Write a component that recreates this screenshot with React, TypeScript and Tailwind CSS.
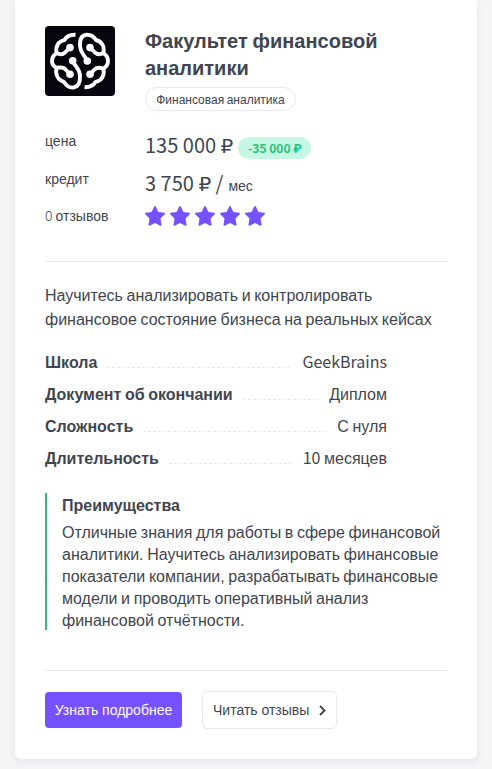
import React from "react";

const SOURCE = "font-['Noto_Sans_CJK_SC','Noto_Sans',sans-serif] [word-spacing:normal]";

function Logo() {
  return (
    <svg viewBox="0 0 70 70" className="block h-[70px] w-[70px] shrink-0 rounded-[4px] bg-[#05060d]">
      <g fill="none" stroke="#fff" strokeWidth="3.9" strokeLinejoin="round">
        <path d="M30.5 8.8C25 8.6 21.5 10.5 19.3 14.2C13 15.5 10.3 20.5 11.6 27.2C8.6 29.2 7 31.8 7 35C7 38.5 9 40.8 12 41.8C17 41 19.5 42 20.5 43.5L25 48.2" />
        <path d="M25 21.8L19.8 26.6C17.8 28.8 14.5 28.4 11.6 27.3" />
        <path d="M11.6 41.5C10 48.5 13 54 19 56C21.5 60 25 62 28.5 61.5C34 60.5 35.3 56 35 50C35 43 31.5 42.5 27.6 35" />
        <path d="M39.5 61.2C45 61.4 48.5 59.5 50.7 55.8C57 54.5 59.7 49.5 58.4 42.8C61.4 40.8 63 38.2 63 35C63 31.8 61.4 29.2 58.4 27.2C59.7 20.5 57 15.5 51 14C48.5 10 45 8.5 41.5 8.7C36.5 9.2 34.7 13.5 35 20C35.3 27 39 28 42.2 35" />
        <path d="M45 21.8L50.2 26.6C52.2 28.8 55.5 28.4 58.4 27.3" />
        <path d="M45 48.2L49.7 43.4C51.7 41.2 55.5 41.6 58.4 42.5" />
      </g>
      <g fill="#fff">
        <circle cx="25" cy="21.6" r="3.8" />
        <circle cx="45" cy="21.6" r="3.8" />
        <circle cx="27.7" cy="34.8" r="3.8" />
        <circle cx="42.3" cy="35" r="3.8" />
        <circle cx="25" cy="48.3" r="3.8" />
        <circle cx="45" cy="48.3" r="3.8" />
      </g>
    </svg>
  );
}

function Star() {
  return (
    <svg viewBox="0 0 20 20" className="h-5 w-5" fill="#7551ff">
      <path d="M9.2.6Q10 -.5 10.8.6L13.4 6L19.2 6.8Q20.5 7.2 19.7 8.2L15.5 12.4L16.5 18.8Q16.5 20 15.3 19.7L10 17L4.7 19.7Q3.5 20 3.5 18.8L4.5 12.4L.3 8.2Q-.5 7.2.8 6.8L6.6 6Z" />
    </svg>
  );
}

function Ruble() {
  return <span className="font-['DejaVu_Sans']">₽</span>;
}

function Row({ label, children }: { label: string; children: React.ReactNode }) {
  return (
    <div className="flex h-8 items-start leading-6">
      <span className="pt-px font-bold">{label}</span>
      <svg className="mx-[10px] mt-[17px] h-px min-w-0 flex-1">
        <line x1="0" y1="0.5" x2="100%" y2="0.5" stroke="#e8e9ea" strokeDasharray="3 2" />
      </svg>
      <span className="h-6 whitespace-nowrap">{children}</span>
    </div>
  );
}

export default function App() {
  return (
    <div className="h-[769px] overflow-hidden bg-[#f4f5f7] px-[15px] font-['Liberation_Sans',Arial,sans-serif] text-base text-[#3f4650] [word-spacing:-0.85px]">
      <div className="h-[759px] w-[462px] rounded-b-[6px] bg-white px-[30px] pt-[26px] shadow-[0_4px_10px_rgba(0,0,0,0.06)]">
        <div className="flex h-[106px] gap-[30px]">
          <Logo />
          <div>
            <h1 className="mt-[2px] text-[20px] leading-[27px] font-bold">
              Факультет финансовой
              <br />
              аналитики
            </h1>
            <div className="mt-[5px] flex h-6 w-[151px] items-center justify-center rounded-full border border-[#e8e9ea] pt-[2px] text-[12px]">
              Финансовая аналитика
            </div>
          </div>
        </div>
        <div className="flex h-[38px]">
          <span className="w-[100px] text-sm leading-[18px]">цена</span>
          <span className={`${SOURCE} -mt-px h-7 text-[20px] leading-7 whitespace-nowrap`}>
            135 000 <Ruble />
          </span>
          <span className={`${SOURCE} mt-[5px] ml-[5px] h-[22px] w-[73px] rounded-full bg-[#c6f7e2] text-center text-[12px] leading-[22px] font-bold whitespace-nowrap text-[#27c281]`}>
            -35 000 <span className="font-['Roboto']">₽</span>
          </span>
        </div>
        <div className="flex h-[37px]">
          <span className="w-[100px] text-sm leading-[18px]">кредит</span>
          <span className={`${SOURCE} -mt-px h-7 text-[20px] leading-7 whitespace-nowrap`}>
            3 750 <Ruble /> /
          </span>
          <span className="ml-[5px] text-sm leading-8">мес</span>
        </div>
        <div className="flex h-[54px]">
          <span className="-mt-px w-[100px] text-sm leading-[18px] whitespace-nowrap">
            <span className={`${SOURCE} font-light`}>0</span> отзывов
          </span>
          <div className="-mt-px flex gap-[5px]">
            <Star />
            <Star />
            <Star />
            <Star />
            <Star />
          </div>
        </div>
        <div className="h-px bg-[#e8e9ea]" />
        <p className="mt-[22px] h-[66px] leading-6 whitespace-nowrap">
          Научитесь анализировать и контролировать
          <br />
          финансовое состояние бизнеса на реальных кейсах
        </p>
        <div className="h-[143px] w-[342px]">
          <Row label="Школа">
            <span className={`${SOURCE} -mt-px block leading-6`}>GeekBrains</span>
          </Row>
          <Row label="Документ об окончании">
            <span className="block pt-px">Диплом</span>
          </Row>
          <Row label="Сложность">
            <span className="block pt-px">С нуля</span>
          </Row>
          <Row label="Длительность">
            <span className="-mt-px block">
              <span className={SOURCE}>10 </span>месяцев
            </span>
          </Row>
        </div>
        <div className="h-[137px] border-l-2 border-[#27c281] pl-[15px] whitespace-nowrap">
          <h2 className="pt-px leading-6 font-bold">Преимущества</h2>
          <p className="mt-[4px] leading-[22px]">
            Отличные знания для работы в сфере финансовой
            <br />
            аналитики. Научитесь анализировать финансовые
            <br />
            показатели компании, разрабатывать финансовые
            <br />
            модели и проводить оперативный анализ
            <br />
            финансовой отчётности.
          </p>
        </div>
        <div className="mt-10 h-px bg-[#e8e9ea]" />
        <div className="mt-5 flex items-center gap-5 text-sm [word-spacing:normal]">
          <button className="h-9 w-[137px] rounded-[4px] bg-[#7551ff] whitespace-nowrap text-white">Узнать подробнее</button>
          <button className="flex h-[38px] w-[135px] items-center rounded-[5px] border border-[#e8e9ea] pl-[10px] whitespace-nowrap">
            Читать отзывы
            <svg viewBox="0 0 7 11" className="ml-[10px] h-[11px] w-[7px]" fill="none" stroke="#3f4650" strokeWidth="1.9">
              <path d="M1 1L5.5 5.5L1 10" />
            </svg>
          </button>
        </div>
      </div>
    </div>
  );
}
